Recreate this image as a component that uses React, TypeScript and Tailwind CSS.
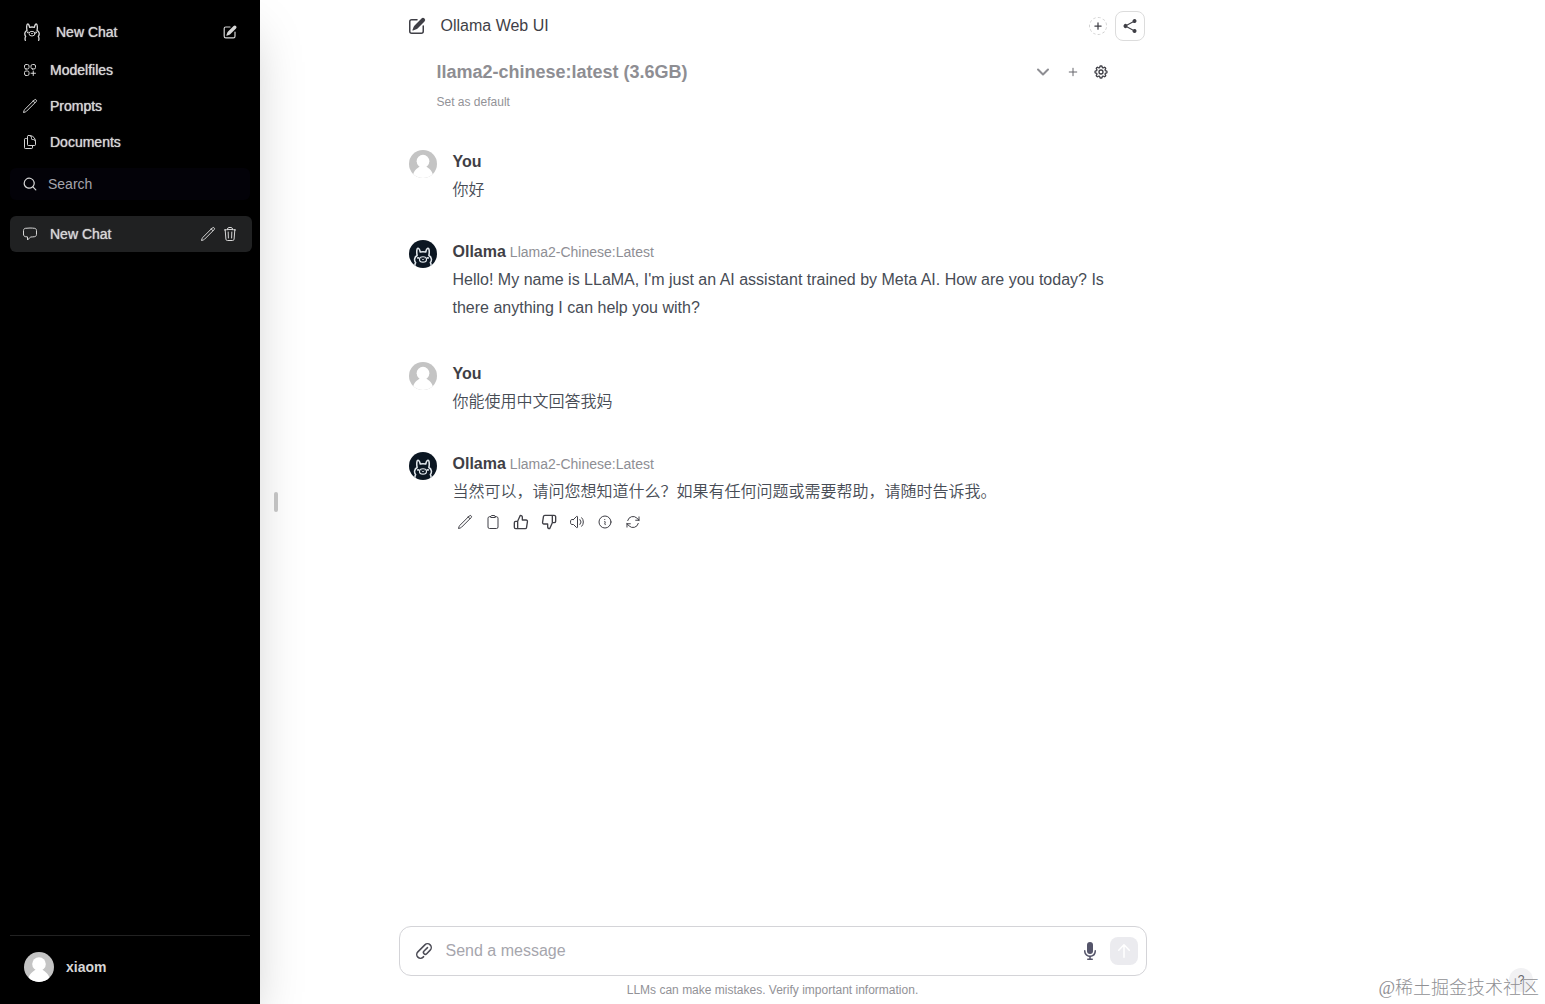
import type { ReactNode } from "react";
import { FiThumbsDown, FiThumbsUp } from "react-icons/fi";
import {
  HiMiniArrowUp,
  HiMiniMagnifyingGlass,
  HiMiniMicrophone,
  HiMiniPaperClip,
  HiMiniPencilSquare,
  HiOutlineArrowPath,
  HiOutlineChatBubbleLeft,
  HiOutlineChevronDown,
  HiOutlineClipboard,
  HiOutlineCog8Tooth,
  HiOutlineDocumentDuplicate,
  HiOutlineInformationCircle,
  HiOutlinePencil,
  HiOutlinePlus,
  HiOutlineSpeakerWave,
  HiOutlineSquaresPlus,
  HiOutlineTrash,
  HiShare,
} from "react-icons/hi2";

function LlamaFace({ className }: { className?: string }) {
  return (
    <svg viewBox="0 0 48 54" fill="none" stroke="currentColor" strokeWidth="4" strokeLinecap="round" strokeLinejoin="round" className={className} aria-hidden="true">
      <path d="M4 52c-2-5-1-8 1-12-4-5-4-14 4-18C7 14 8 3 11 3c4 0 5 5 6 10 4-1 10-1 14 0 1-5 2-10 6-10 3 0 4 11 2 19 8 4 8 13 4 18 2 4 3 7 1 12" />
      <ellipse cx="24" cy="32" rx="9" ry="7" strokeWidth="3" />
      <path d="M22 31l2 2 2-2" strokeWidth="2.500" />
      <path d="M11 28h1M36 28h1" strokeWidth="5" />
    </svg>
  );
}

function PersonAvatar({ className }: { className: string }) {
  return (
    <span className={`block shrink-0 overflow-hidden rounded-full bg-[#c4c4c4] ${className}`}>
      <svg viewBox="0 0 30 30" fill="#fff" className="size-full" aria-hidden="true">
        <circle cx="15" cy="12" r="6.800" />
        <path d="M12 17h6c1.500 2 6 3.500 7.500 9l2 4.500h-25l2-4.500C6 20.500 10.500 19 12 17z" />
      </svg>
    </span>
  );
}

function LlamaAvatar() {
  return (
    <span className="flex size-7 shrink-0 items-end justify-center overflow-hidden rounded-full bg-[#0b1622] text-[#dfe5ea]">
      <LlamaFace className="h-[21px] w-5" />
    </span>
  );
}

const medium = "[text-shadow:0_0_1px_currentColor]";

function NavItem({ icon, label }: { icon: ReactNode; label: string }) {
  return (
    <a href="#" className="flex h-9 items-center gap-3 rounded-md px-3">
      {icon}
      <span className={medium}>{label}</span>
    </a>
  );
}

function Message({ children, user, tools }: { children: ReactNode; user?: boolean; tools?: ReactNode }) {
  return (
    <article className="flex gap-4">
      {user ? <PersonAvatar className="size-7" /> : <LlamaAvatar />}
      <div className="min-w-0 flex-1">
        <h2 className="flex items-baseline gap-1 text-base leading-6 font-bold text-[#3f3f46]">
          {user ? "You" : "Ollama"}
          {!user && <span className="text-sm leading-6 font-normal text-[#8e8e94]">Llama2-Chinese:Latest</span>}
        </h2>
        <p className="mt-0.5 text-base leading-7 font-[350] text-[#474c55]">{children}</p>
        {tools}
      </div>
    </article>
  );
}

const toolItems: { label: string; icon: ReactNode }[] = [
  { label: "Edit", icon: <HiOutlinePencil className="size-4" /> },
  { label: "Copy", icon: <HiOutlineClipboard className="size-4" /> },
  { label: "Good response", icon: <FiThumbsUp className="size-4" /> },
  { label: "Bad response", icon: <FiThumbsDown className="size-4" /> },
  { label: "Read aloud", icon: <HiOutlineSpeakerWave className="size-4" /> },
  { label: "Generation info", icon: <HiOutlineInformationCircle className="size-4" /> },
  { label: "Regenerate", icon: <HiOutlineArrowPath className="size-4" /> },
];

export default function App() {
  return (
    <div className="relative flex min-h-screen bg-white font-['Liberation_Sans','Noto_Sans_CJK_SC',sans-serif]">
      <aside className="z-10 flex w-[260px] shrink-0 flex-col bg-black px-2.5 text-sm text-[#d6d6d6] shadow-2xl">
        <nav className="flex flex-col pt-3">
          <button type="button" className="flex h-10 items-center gap-3.5 rounded-md px-3 text-left">
            <LlamaFace className="h-[18px] w-5" />
            <span className={`flex-1 ${medium}`}>New Chat</span>
            <HiMiniPencilSquare className="size-4" />
          </button>
          <NavItem icon={<HiOutlineSquaresPlus className="size-4" />} label="Modelfiles" />
          <NavItem icon={<HiOutlinePencil className="size-4" />} label="Prompts" />
          <NavItem icon={<HiOutlineDocumentDuplicate className="size-4" />} label="Documents" />
        </nav>
        <label className="mt-2 flex h-8 items-center gap-2.5 rounded-md bg-[#030208] px-3">
          <HiMiniMagnifyingGlass className="size-4" />
          <input aria-label="Search" placeholder="Search" className="min-w-0 flex-1 bg-transparent outline-none placeholder:text-[#a5a5ad]" />
        </label>
        <div className="mt-4 -mr-0.5 flex h-9 items-center rounded-md bg-[#202122] px-3">
          <a href="#" className="flex flex-1 items-center gap-3">
            <HiOutlineChatBubbleLeft className="size-4" />
            <span className={medium}>New Chat</span>
          </a>
          <div className="flex gap-1.5 pr-0.5">
            <button type="button" aria-label="Rename chat"><HiOutlinePencil className="size-4" /></button>
            <button type="button" aria-label="Delete chat"><HiOutlineTrash className="size-4" /></button>
          </div>
        </div>
        <button type="button" className="mt-auto flex h-[69px] items-center gap-3 border-t border-[#222] px-3.5 pb-1.5 text-left">
          <PersonAvatar className="size-[30px]" />
          <span className="font-bold">xiaom</span>
        </button>
      </aside>

      <div className="flex w-8 shrink-0 items-center justify-center">
        <button type="button" aria-label="Toggle sidebar" className="h-5 w-1 rounded-full bg-[#c9c9c9]" />
      </div>

      <main className="flex min-w-0 flex-1 flex-col items-center pr-[292px]">
        <header className="flex h-[52px] w-full max-w-[748px] items-center pr-0.5 pl-2">
          <button type="button" aria-label="New chat" className="text-[#3f3f46]"><HiMiniPencilSquare className="size-5" /></button>
          <h1 className="flex-1 pl-3.5 text-base text-[#3f3f46]">Ollama Web UI</h1>
          <button type="button" aria-label="Add tag" className="mr-2 flex size-[18px] items-center justify-center rounded-full border border-dashed border-[#d0d0d0] text-[#3f3f46]">
            <HiOutlinePlus className="size-2.5" strokeWidth={3} />
          </button>
          <button type="button" aria-label="Share" className="flex size-[30px] items-center justify-center rounded-lg border border-[#dcdcdc] text-[#3f3f46]">
            <HiShare className="size-4" />
          </button>
        </header>

        <section className="w-full max-w-[748px] px-[38px] pt-1.5">
          <div className="flex h-7 items-center gap-3.5">
            <button type="button" className="flex flex-1 items-center justify-between pr-0.5 text-left text-lg font-bold text-[#8e8e93]">
              llama2-chinese:latest (3.6GB)
              <HiOutlineChevronDown className="size-4" strokeWidth={3} />
            </button>
            <button type="button" aria-label="Add model" className="text-[#66666c]"><HiOutlinePlus className="size-3" strokeWidth={2} /></button>
            <button type="button" aria-label="Settings" className="text-[#3f3f46]"><HiOutlineCog8Tooth className="size-4" strokeWidth={2} /></button>
          </div>
          <button type="button" className="mt-2 block text-xs leading-4 text-[#929297]">Set as default</button>
        </section>

        <section className="flex w-full max-w-[748px] flex-1 flex-col pt-10 pr-6 pl-2.5">
          <div className="flex flex-col gap-10">
            <div className="flex flex-col gap-9">
              <Message user>你好</Message>
              <Message>Hello! My name is LLaMA, I'm just an AI assistant trained by Meta AI. How are you today? Is there anything I can help you with?</Message>
            </div>
            <div className="flex flex-col gap-9">
              <Message user>你能使用中文回答我妈</Message>
              <Message
                tools={
                  <div className="mt-1 flex gap-1 text-[#3f3f46]">
                    {toolItems.map((t) => (
                      <button key={t.label} type="button" aria-label={t.label} className="p-1">{t.icon}</button>
                    ))}
                  </div>
                }
              >
                当然可以，请问您想知道什么？如果有任何问题或需要帮助，请随时告诉我。
              </Message>
            </div>
          </div>
        </section>

        <footer className="w-full max-w-[748px] pb-1.5">
          <form className="flex h-[50px] items-center rounded-xl border border-[#d4d4d8] pr-2 pl-3.5">
            <button type="button" aria-label="Attach file" className="text-[#4b4b55]"><HiMiniPaperClip className="size-5" /></button>
            <input aria-label="Message" placeholder="Send a message" className="min-w-0 flex-1 px-3 text-base outline-none placeholder:text-[#a6a6ad]" />
            <button type="button" aria-label="Record voice" className="mr-2.5 text-[#55556a]"><HiMiniMicrophone className="size-5" /></button>
            <button type="submit" aria-label="Send" className="flex size-7 items-center justify-center rounded-lg bg-[#ebebef] text-white"><HiMiniArrowUp className="size-5" /></button>
          </form>
          <p className="mt-1.5 text-center text-xs leading-4 text-[#929297]">LLMs can make mistakes. Verify important information.</p>
        </footer>
      </main>

      <button type="button" aria-label="Help" className="absolute right-3 bottom-3 flex size-6 items-center justify-center rounded-full bg-[#f1f1f3] text-xs text-[#66666c]">
        ?
      </button>
      <p className="pointer-events-none absolute right-1.5 bottom-1 font-['Liberation_Serif','Noto_Sans_CJK_SC',serif] text-lg leading-6 font-light text-[#909094]">@稀土掘金技术社区</p>
    </div>
  );
}
